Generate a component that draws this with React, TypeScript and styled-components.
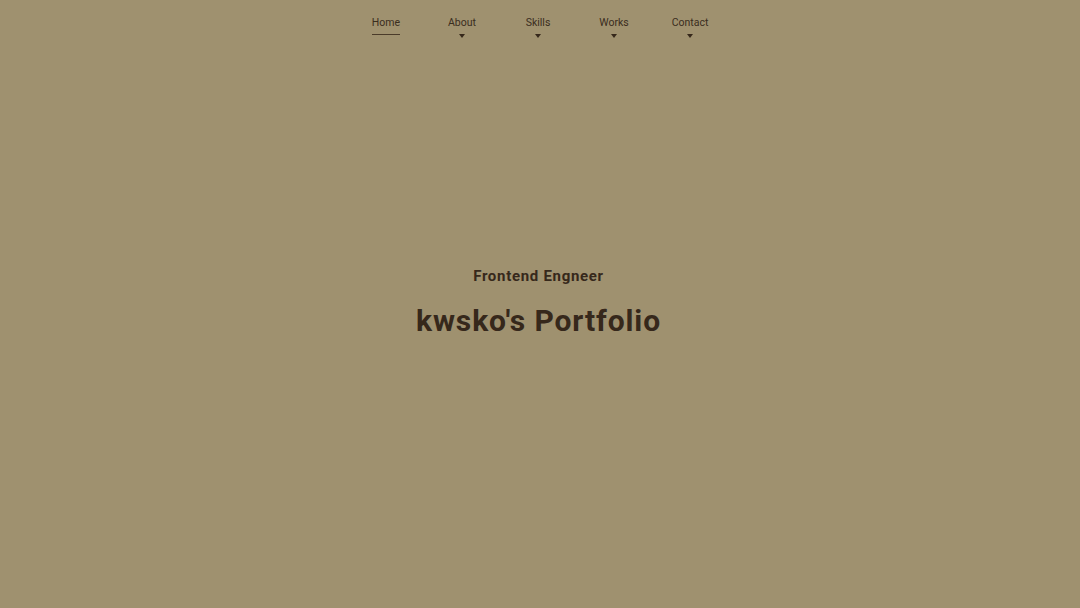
import React from 'react';
import styled, { createGlobalStyle } from 'styled-components';

const GlobalStyle = createGlobalStyle`
  html, body {
    margin: 0;
    padding: 0;
    background: #9f916f;
  }
  body {
    font-family: Roboto, "Noto Sans", sans-serif;
    color: #36281b;
  }
`;

const Page = styled.div`
  width: 100%;
  height: 608px;
  display: flex;
  flex-direction: column;
  background: #9f916f;
`;

const Nav = styled.nav`
  display: flex;
  justify-content: center;
  padding: 16px 4px 0 0;
`;

const NavItem = styled.a`
  width: 76px;
  display: flex;
  flex-direction: column;
  align-items: center;
  font-size: 10.5px;
  line-height: 13px;
  color: #3a2d1e;
  cursor: pointer;
  text-decoration: none;
`;

const Label = styled.span<{ $active?: boolean }>`
  padding-bottom: 5px;
  border-bottom: 1px solid ${p => (p.$active ? '#4a3b2a' : 'transparent')};
`;

const Caret = styled.span`
  width: 0;
  height: 0;
  margin-top: -1px;
  border-left: 3.5px solid transparent;
  border-right: 3.5px solid transparent;
  border-top: 4px solid #36281b;
`;

const Hero = styled.main`
  flex: 1;
  display: flex;
  flex-direction: column;
  align-items: center;
  padding-top: 229px;
  padding-right: 3px;
`;

const Subtitle = styled.h2`
  margin: 0;
  font-size: 15px;
  font-weight: 700;
  letter-spacing: 0.7px;
  line-height: 18px;
`;

const Title = styled.h1`
  margin: 18px 0 0;
  font-size: 30px;
  font-weight: 700;
  letter-spacing: 0.9px;
  line-height: 36px;
`;

const links = ['Home', 'About', 'Skills', 'Works', 'Contact'];

export default function App() {
  return (
    <>
      <GlobalStyle />
      <Page>
        <Nav>
          {links.map((l, i) => (
            <NavItem key={l}>
              <Label $active={i === 0}>{l}</Label>
              {i !== 0 && <Caret />}
            </NavItem>
          ))}
        </Nav>
        <Hero>
          <Subtitle>Frontend Engneer</Subtitle>
          <Title>kwsko's Portfolio</Title>
        </Hero>
      </Page>
    </>
  );
}
